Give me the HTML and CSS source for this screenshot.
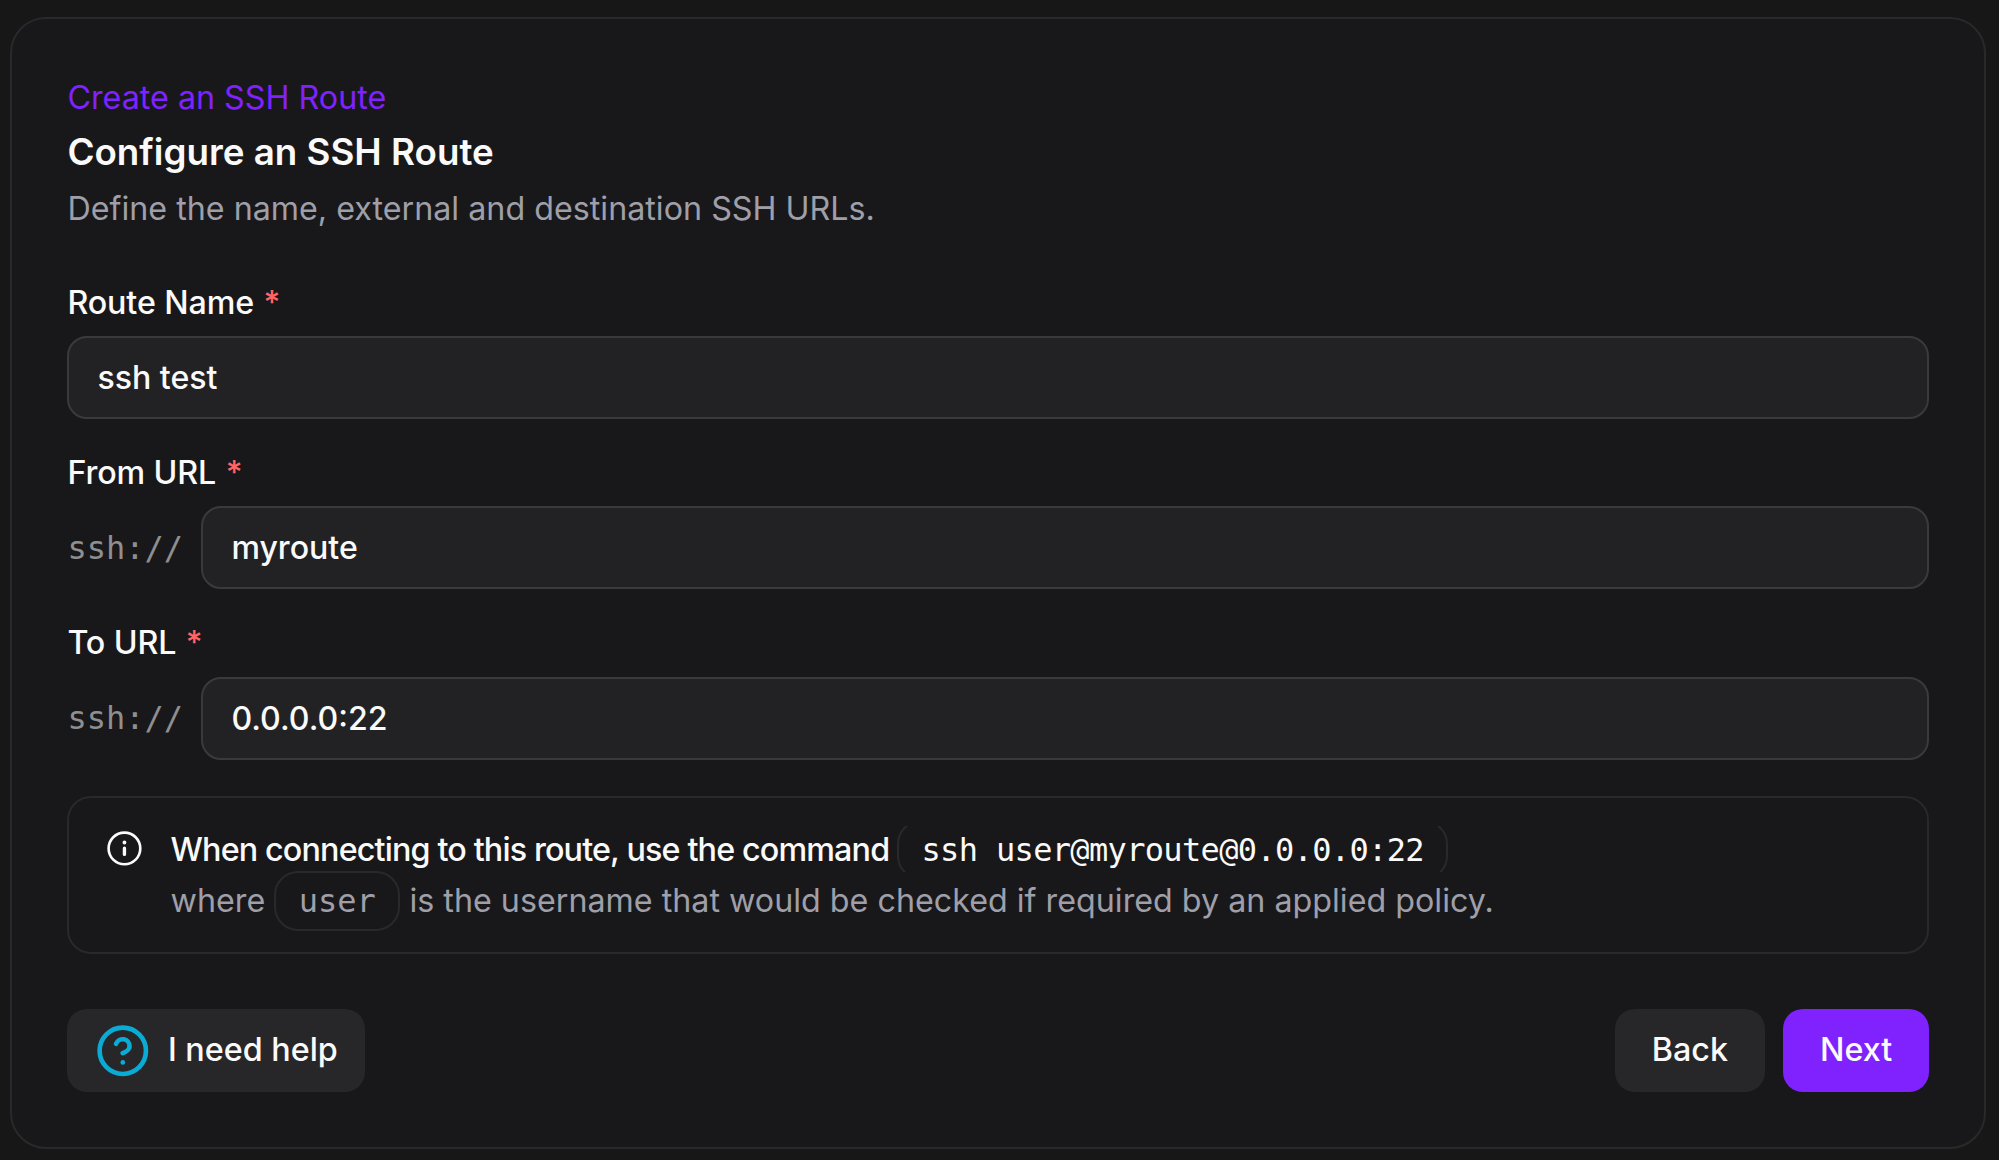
FILE: index.html
```html
<!DOCTYPE html>
<html lang="en">
<head>
<meta charset="utf-8">
<title>Configure an SSH Route</title>
<link rel="stylesheet" href="styles.css">
</head>
<body>
<main class="card">
  <header class="heading">
    <p class="eyebrow">Create an SSH Route</p>
    <h1 class="title">Configure an SSH Route</h1>
    <p class="description">Define the name, external and destination SSH URLs.</p>
  </header>
  <form class="form">
    <div class="field">
      <label class="label" for="name">Route Name <span class="required">*</span></label>
      <div class="control"><input class="input" id="name" type="text" value="ssh test"></div>
    </div>
    <div class="field">
      <label class="label" for="from">From URL <span class="required">*</span></label>
      <div class="control"><span class="prefix">ssh://</span><input class="input" id="from" type="text" value="myroute"></div>
    </div>
    <div class="field">
      <label class="label" for="to">To URL <span class="required">*</span></label>
      <div class="control"><span class="prefix">ssh://</span><input class="input" id="to" type="text" value="0.0.0.0:22"></div>
    </div>
    <section class="alert">
      <svg class="alert-icon" viewBox="0 0 15 15" fill="currentColor" aria-hidden="true">
        <path fill-rule="evenodd" clip-rule="evenodd" d="M7.5.877a6.623 6.623 0 1 0 0 13.246A6.623 6.623 0 0 0 7.5.877ZM1.9 7.5a5.6 5.6 0 1 1 11.2 0 5.6 5.6 0 0 1-11.2 0ZM8.25 5.2a.75.75 0 1 1-1.5 0 .75.75 0 0 1 1.5 0ZM6.85 7.4a.65.65 0 0 1 1.3 0V9.8a.65.65 0 0 1-1.3 0V7.4Z"/>
      </svg>
      <div class="alert-body">
        <h2 class="alert-title">When connecting to this route, use the command <code class="code">ssh user@myroute@0.0.0.0:22</code></h2>
        <p class="alert-text">where <code class="code">user</code> is the username that would be checked if required by an applied policy.</p>
      </div>
    </section>
    <footer class="actions">
      <button class="button help" type="button">
        <svg class="help-icon" viewBox="0 0 24 24" fill="none" stroke="currentColor" stroke-width="2" stroke-linecap="round" stroke-linejoin="round" aria-hidden="true">
          <circle cx="12" cy="12" r="10"/><path d="M9.09 9a3 3 0 0 1 5.83 1c0 2-3 3-3 3"/><path d="M12 17h.01"/>
        </svg>
        I need help
      </button>
      <button class="button back" type="button">Back</button>
      <button class="button next" type="button">Next</button>
    </footer>
  </form>
</main>
</body>
</html>
```
FILE: styles.css
```css
* { box-sizing: border-box; margin: 0; }

body {
  height: 1160px;
  padding: 16.5px 13px 11px 10.4px;
  overflow: hidden;
  background: #171717;
  color: #fafafa;
  font: 400 32.25px/46px Inter, sans-serif;
  letter-spacing: 0;
}

.card {
  height: 1132px;
  padding: 56.5px 55px 0;
  border: 2px solid #29292b;
  border-radius: 36px;
  background: #18181b;
}

.heading { padding-bottom: 47.5px; }
.eyebrow { color: #7f22fe; }
.title { font-size: 36.75px; line-height: 56px; font-weight: 600; padding-top: 3px; }
.description { color: #9f9fa9; padding-top: 6px; }

.field { height: 170.3px; }
.label { display: block; height: 56.7px; font-weight: 500; letter-spacing: -0.12px; }
.required { margin-left: 1px; color: #ff6467; }
.control { display: flex; align-items: center; gap: 19px; }
.prefix {
  width: 115px;
  color: #8f8f8f;
  font-family: "DejaVu Sans Mono", monospace;
  font-size: 32px;
}
.input {
  flex: 1;
  min-width: 0;
  height: 83px;
  padding: 0 28px;
  border: 2px solid #3a3a3d;
  border-radius: 20px;
  background: #222224;
  color: #fafafa;
  font: 500 32.1px/46px Inter, sans-serif;
  outline: none;
}

.alert {
  display: flex;
  height: 158px;
  margin-top: 5.6px;
  padding: 28px 35.4px;
  gap: 26.9px;
  border: 2px solid #29292b;
  border-radius: 24px;
}
.alert-icon { flex: none; width: 38.9px; height: 38.9px; margin-top: 3px; }
.alert-title {
  height: 46.5px;
  padding-top: 1px;
  overflow: hidden;
  font-size: 32.3px;
  line-height: 46.5px;
  font-weight: 500;
  letter-spacing: -0.86px;
  white-space: nowrap;
}
.alert-text { line-height: 58px; color: #9f9fa9; white-space: nowrap; }
.code {
  padding: 9px 22.5px;
  border: 2px solid #29292b;
  border-radius: 24px;
  font-family: "DejaVu Sans Mono", monospace;
  font-size: 32px;
}
.alert-title .code { letter-spacing: -0.66px; }

.actions { display: flex; gap: 18.4px; padding-top: 55px; }
.button {
  display: flex;
  align-items: center;
  justify-content: center;
  height: 83px;
  padding: 0;
  border: 0;
  border-radius: 20px;
  background: #27272a;
  color: #fafafa;
  font: 500 32.3px/46px Inter, sans-serif;
}
.help {
  width: 297.7px;
  gap: 17.5px;
  margin-right: auto;
  padding-left: 27.4px;
  justify-content: flex-start;
}
.help-icon { width: 55.6px; height: 55.6px; color: #0aacd6; }
.back { width: 150px; }
.next { width: 145.7px; background: #7f22fe; }
```
